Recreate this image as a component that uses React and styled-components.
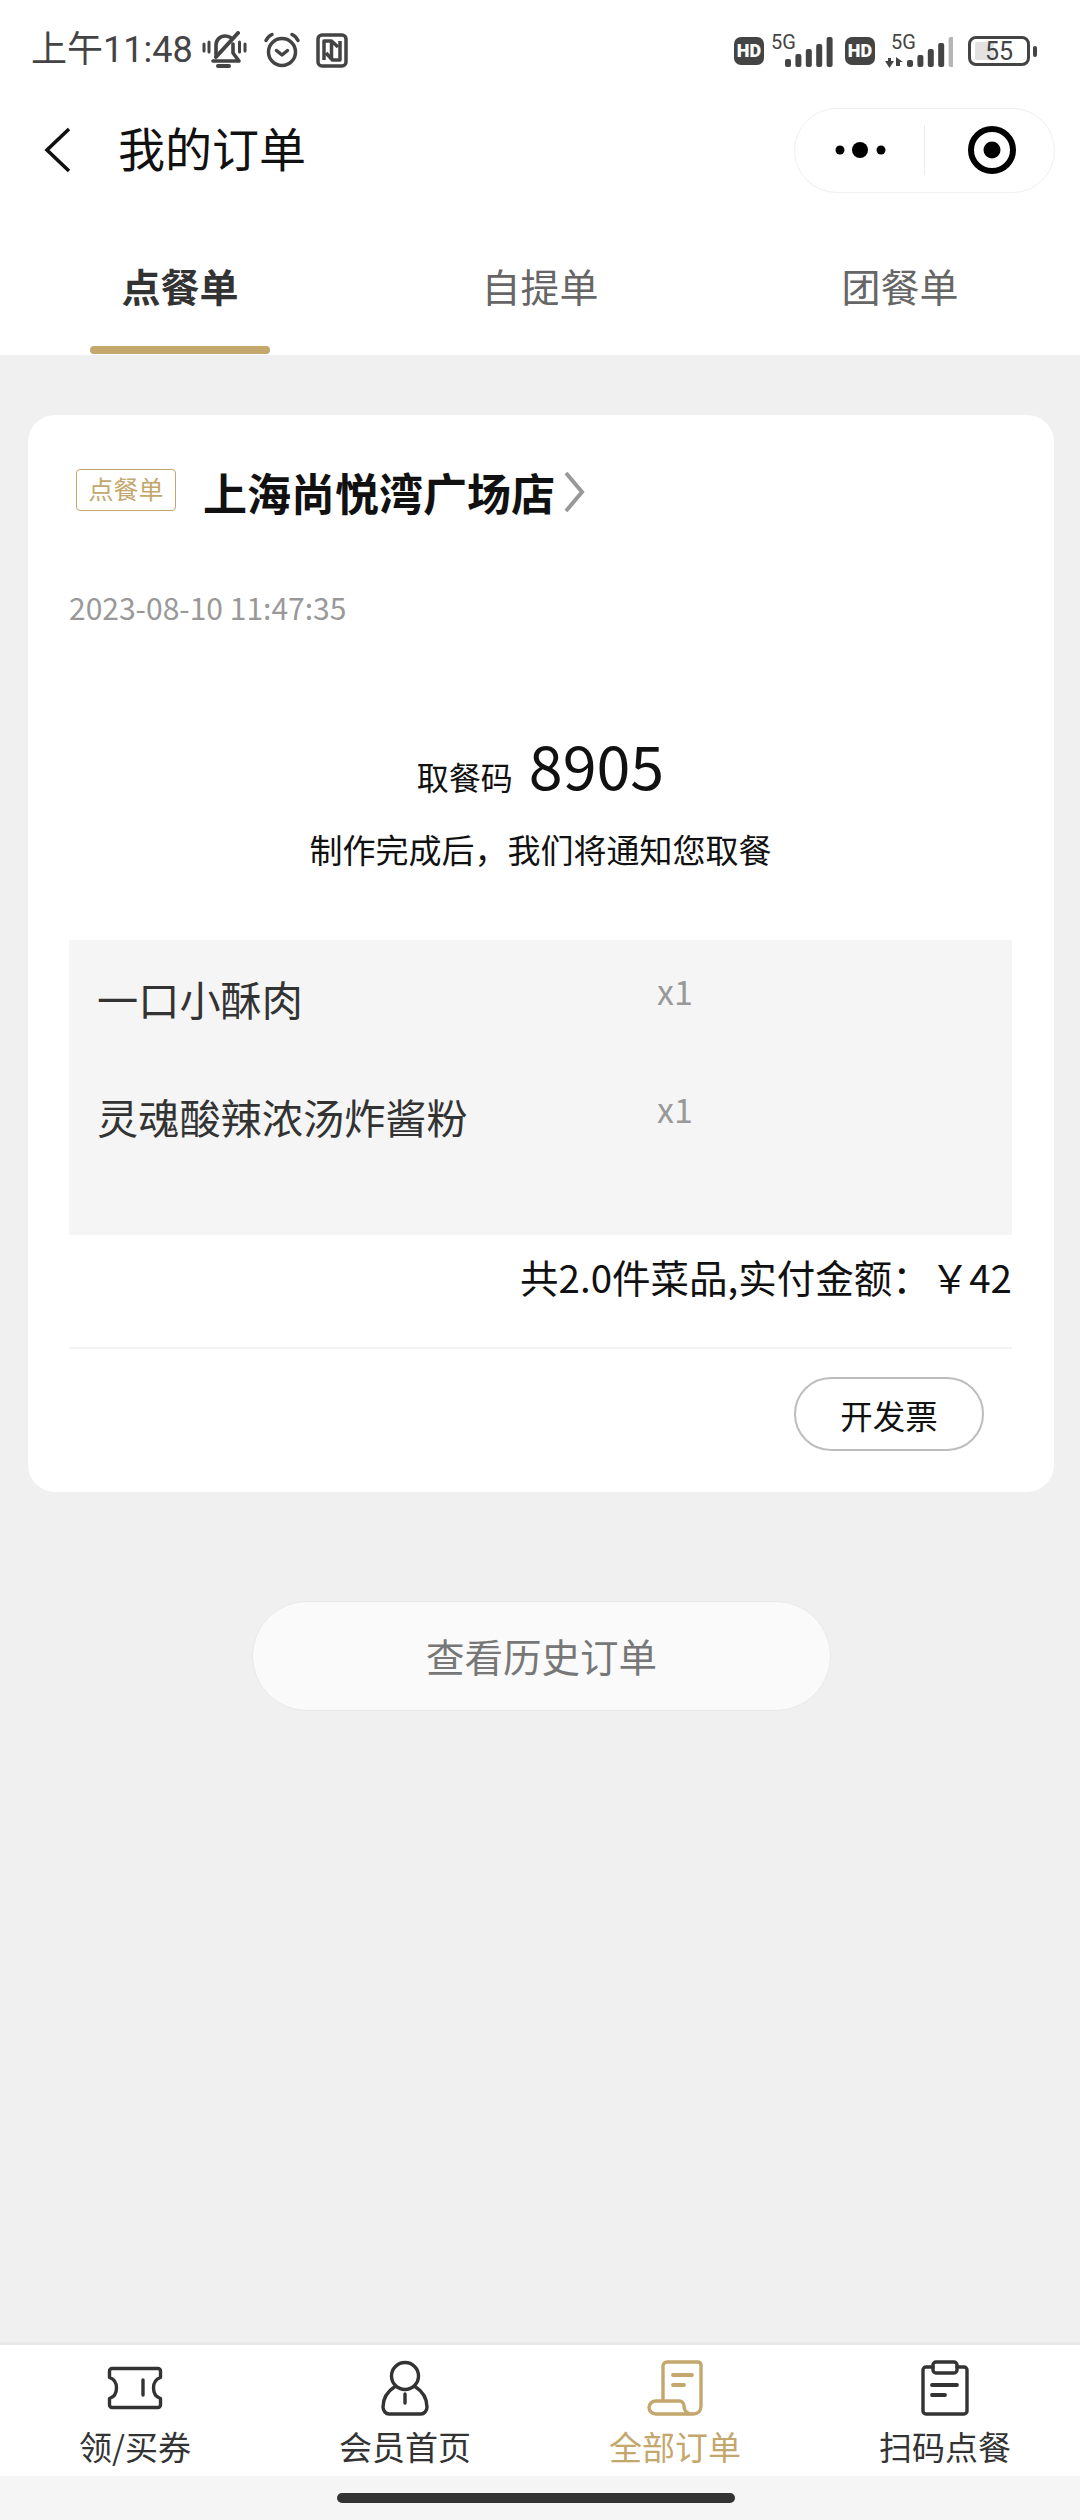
import React from "react";
import styled, { createGlobalStyle } from "styled-components";

const FONT = `"Noto Sans CJK SC", "Noto Sans", sans-serif`;
const GOLD = "#c4a76c";

const Global = createGlobalStyle`
  html, body { margin: 0; padding: 0; background: #f0f0f0; }
  * { box-sizing: border-box; }
  body { font-family: ${FONT}; }
`;

const Page = styled.div`
  width: 1080px;
  height: 2520px;
  display: flex;
  flex-direction: column;
  background: #f0f0f0;
  overflow: hidden;
`;

const Header = styled.header`
  background: #fff;
`;

const StatusBar = styled.div`
  height: 100px;
  display: flex;
  align-items: center;
  padding: 0 50px 0 31px;
  color: #444;
`;

const Time = styled.span`
  font-family: Roboto, "Noto Sans CJK SC", sans-serif;
  font-size: 36px;
  line-height: 50px;
  width: 171px;
`;

const StatusIcons = styled.div`
  display: flex;
  align-items: center;
  gap: 15px;
  height: 40px;
`;

const Spacer = styled.div`
  flex: 1;
`;

const NetworkIcons = styled.div`
  display: flex;
  align-items: center;
  gap: 6px;
  margin-top: 1px;
`;

const HdBadge = styled.span`
  width: 30px;
  height: 28px;
  border-radius: 7px;
  background: #444;
  color: #fff;
  font-family: Roboto, sans-serif;
  font-weight: 900;
  font-size: 18px;
  line-height: 28px;
  text-align: center;
`;

const Battery = styled.div`
  position: relative;
  width: 62px;
  height: 30px;
  margin-left: 9px;
  border: 3px solid #444;
  border-radius: 8px;
  font-family: Roboto, sans-serif;
  font-size: 25px;
  line-height: 25px;
  text-align: center;
  color: #444;
  &::before {
    content: "";
    position: absolute;
    left: 4px;
    top: 3px;
    bottom: 3px;
    width: 19px;
    background: #e2e2e2;
    border-radius: 2px;
    z-index: 0;
  }
  &::after {
    content: "";
    position: absolute;
    right: -10px;
    top: 7px;
    width: 4px;
    height: 11px;
    border-radius: 2px;
    background: #444;
  }
`;

const BatteryText = styled.span`
  position: relative;
  z-index: 1;
`;

const NavBar = styled.div`
  height: 100px;
  display: flex;
  align-items: center;
  padding: 0 25px 0 44px;
`;

const Title = styled.h1`
  margin: -6px 0 0 46px;
  font-size: 47px;
  font-weight: 400;
  line-height: 60px;
  color: #111;
  letter-spacing: 0;
`;

const Capsule = styled.div`
  width: 261px;
  height: 85px;
  border: 1.5px solid #efefef;
  border-radius: 43px;
  display: flex;
  align-items: center;
`;

const CapsuleCell = styled.div`
  height: 50px;
  display: flex;
  align-items: center;
  justify-content: center;
  width: ${(p) => p.$w}px;
  padding-left: ${(p) => p.$inset || 0}px;
  border-right: ${(p) => (p.$divided ? "1.5px solid #ececec" : "none")};
`;

const Tabs = styled.nav`
  height: 155px;
  display: flex;
`;

const Tab = styled.div`
  flex: 1;
  display: flex;
  flex-direction: column;
  align-items: center;
  padding-top: 55px;
  font-size: 39px;
  line-height: 60px;
  font-weight: ${(p) => (p.$active ? 700 : 400)};
  color: ${(p) => (p.$active ? "#333" : "#666")};
`;

const TabMark = styled.div`
  width: 180px;
  height: 8px;
  border-radius: 4px;
  margin-top: auto;
  margin-bottom: 1px;
  background: ${GOLD};
`;

const Main = styled.main`
  flex: 1;
  padding: 60px 0 0 28px;
  display: flex;
  flex-direction: column;
`;

const Card = styled.section`
  width: 1026px;
  height: 1077px;
  background: #fff;
  border-radius: 27px;
  padding: 52px 42px 0 41px;
  display: flex;
  flex-direction: column;
`;

const StoreRow = styled.div`
  display: flex;
  align-items: center;
  height: 50px;
  padding-left: 7px;
`;

const TypeTag = styled.span`
  width: 100px;
  height: 42px;
  border: 1.500px solid ${GOLD};
  border-radius: 4px;
  color: ${GOLD};
  font-size: 25px;
  line-height: 37px;
  text-align: center;
  margin-top: -4px;
`;

const StoreName = styled.span`
  margin-left: 27px;
  font-size: 44px;
  font-weight: 700;
  line-height: 50px;
  color: #111;
`;

const StoreChevron = styled.svg`
  margin: -1px 0 0 8px;
`;

const DateText = styled.div`
  margin-top: 70px;
  font-size: 30px;
  line-height: 40px;
  color: #999;
`;

const CodeRow = styled.div`
  margin-top: 97px;
  display: flex;
  justify-content: center;
  align-items: baseline;
  gap: 16px;
  height: 80px;
  line-height: 80px;
  color: #111;
`;

const CodeLabel = styled.span`
  font-size: 32px;
`;

const CodeValue = styled.span`
  font-size: 61px;
`;

const Hint = styled.div`
  margin-top: 23px;
  font-size: 33px;
  line-height: 44px;
  text-align: center;
  color: #111;
`;

const ItemsBox = styled.div`
  margin-top: 69px;
  height: 295px;
  background: #f5f5f5;
  padding: 28px 28px 0;
  display: flex;
  flex-direction: column;
  gap: 60px;
`;

const ItemRow = styled.div`
  display: grid;
  grid-template-columns: 560px 1fr;
  height: 58px;
`;

const ItemName = styled.span`
  font-size: 41.200px;
  line-height: 60px;
  color: #333;
`;

const ItemQty = styled.span`
  font-size: 34px;
  line-height: 46px;
  color: #999;
`;

const Total = styled.div`
  margin-top: 14px;
  font-size: 38.500px;
  line-height: 54px;
  text-align: right;
  color: #111;
`;

const Divider = styled.div`
  margin-top: 44px;
  height: 1.500px;
  background: #f3f3f3;
`;

const ActionRow = styled.div`
  display: flex;
  justify-content: flex-end;
  padding: 28px 28px 0 0;
`;

const InvoiceButton = styled.div`
  width: 190px;
  height: 74px;
  border: 2px solid #bdbdbd;
  border-radius: 37px;
  font-size: 32.500px;
  line-height: 72px;
  text-align: center;
  color: #111;
`;

const HistoryButton = styled.div`
  margin: 109px 0 0 224px;
  width: 579px;
  height: 110px;
  border: 1.500px solid #e9e9e9;
  border-radius: 55px;
  background: #fafafa;
  font-size: 38.500px;
  line-height: 107px;
  text-align: center;
  color: #777;
`;

const TabBar = styled.footer`
  height: 134px;
  background: #fff;
  border-top: 3px solid #e9e9e9;
  display: grid;
  grid-template-columns: repeat(4, 270px);
`;

const BarItem = styled.div`
  display: flex;
  flex-direction: column;
  align-items: center;
  color: ${(p) => (p.$active ? GOLD : "#333")};
`;

const BarIcon = styled.div`
  height: 56px;
  margin-top: 15px;
  display: flex;
  align-items: center;
  justify-content: center;
`;

const BarLabel = styled.span`
  margin-top: 7px;
  font-size: 33px;
  line-height: 46px;
`;

const HomeArea = styled.div`
  height: 44px;
  background: #f5f5f5;
  display: flex;
  justify-content: center;
  padding: 17px 8px 0 0;
`;

const HomeIndicator = styled.div`
  width: 398px;
  height: 10px;
  border-radius: 5px;
  background: #333;
`;

const Signal = ({ dim, arrows }) => {
  const width = arrows ? 72 : 69;
  const x0 = arrows ? 26 : 15;
  const bars = arrows ? [7, 12, 18, 24, 30] : [8, 13, 18, 23, 30];
  return (
    <svg width={width} height="44" viewBox={`0 -5 ${width} 44`}>
      <text x={arrows ? 10 : 1} y="15" fontFamily="Roboto, sans-serif" fontSize="20" fill="#444">5G</text>
      {arrows && (
        <path
          fill="#444"
          d="M7 24h3v3h3l-4.500 7L4 27h3zM15 32v-9l7 5h-3v4z"
        />
      )}
      {bars.map((h, i) => (
        <rect
          key={i}
          x={x0 + i * 10.4}
          y={33 - h}
          width="6"
          height={h}
          rx="2"
          fill={dim && i === 4 ? "#b5b5b5" : "#444"}
        />
      ))}
    </svg>
  );
};

const MuteBell = () => (
  <svg width="46" height="38" viewBox="0 0 46 38" fill="none" stroke="#444" strokeWidth="3.600" strokeLinecap="round" strokeLinejoin="round">
    <path d="M14 24V14c0-5 4-9 9-9 2 0 4 .5 5.500 1.500" />
    <path d="M31 13v9l6 8H11" />
    <path d="M14 26 36 2" strokeWidth="4" />
    <path d="M16 35h11" strokeWidth="4" />
    <path d="M2 13v7M7 11v10M37.500 11v10M43 13v7" strokeWidth="3" />
  </svg>
);

const Alarm = () => (
  <svg width="38" height="36" viewBox="0 0 38 36" fill="none" stroke="#444" strokeWidth="3.500" strokeLinecap="round" strokeLinejoin="round">
    <circle cx="19" cy="20" r="13.500" />
    <path d="M13.500 18.500 19 23l5.500-4.500" />
    <path d="M3 8.500C4.500 5.500 6.500 3.500 9 2.500M35 8.500C33.500 5.500 31.500 3.500 29 2.500" />
  </svg>
);

const Nfc = () => (
  <svg width="32" height="35" viewBox="0 0 32 35" fill="none" stroke="#444" strokeWidth="3.500" strokeLinejoin="round">
    <rect x="2" y="2" width="28" height="31" rx="4" />
    <path d="M8 27V8h7.500L22 14" />
    <path d="M24 8v19h-7.500L10 20" />
    <path d="M15.500 8v19" />
  </svg>
);

const Ticket = () => (
  <svg width="56" height="46" viewBox="0 0 56 46" fill="none" stroke="currentColor" strokeWidth="3.400" strokeLinecap="round" strokeLinejoin="round">
    <path d="M5 3.500h46a2.500 2.500 0 0 1 2.500 2.500v6.500C49 14 46.500 18 46.500 23s2.500 9 7 10.500V40a2.500 2.500 0 0 1-2.500 2.500H5A2.500 2.500 0 0 1 2.500 40v-6.500C7 32 9.500 28 9.500 23S7 14 2.500 12.500V6A2.500 2.500 0 0 1 5 3.500Z" />
    <path d="M36 15v15" />
  </svg>
);

const Person = () => (
  <svg width="48" height="56" viewBox="0 0 48 56" fill="none" stroke="currentColor" strokeWidth="3.400" strokeLinecap="round" strokeLinejoin="round">
    <circle cx="24" cy="16" r="13.500" />
    <path d="M14 26.500C7 31 2 38 2 47c0 4 3 7 6 7h32c3 0 6-3 6-7 0-9-5-16-12-20.500" />
    <path d="M24 34v9" />
  </svg>
);

const Scroll = () => (
  <svg width="56" height="56" viewBox="0 0 56 56" fill="none" stroke="currentColor" strokeWidth="3.400" strokeLinecap="round" strokeLinejoin="round">
    <path d="M16 41V6a4 4 0 0 1 4-4h31a3 3 0 0 1 3 3v41c0 5-3 8-8 8s-9-3-9-8c0-3-2-5-5-5H9c-4 0-7 3-7 6.500S5 54 9 54h37" />
    <path d="M26 15h19M26 25h11" strokeWidth="3.800" />
  </svg>
);

const Clipboard = () => (
  <svg width="48" height="56" viewBox="0 0 48 56" fill="none" stroke="currentColor" strokeWidth="3.400" strokeLinecap="round" strokeLinejoin="round">
    <path d="M12 7H5a3 3 0 0 0-3 3v41a3 3 0 0 0 3 3h38a3 3 0 0 0 3-3V10a3 3 0 0 0-3-3h-7" />
    <rect x="12" y="2" width="24" height="11" rx="3" />
    <path d="M11 25h25M11 35h13" strokeWidth="3.800" />
  </svg>
);

const navItems = [
  { label: "领/买券", Icon: Ticket },
  { label: "会员首页", Icon: Person },
  { label: "全部订单", Icon: Scroll, active: true },
  { label: "扫码点餐", Icon: Clipboard },
];

export default function App() {
  return (
    <Page>
      <Global />
      <Header>
        <StatusBar>
          <Time>上午11:48</Time>
          <StatusIcons>
            <MuteBell />
            <Alarm />
            <Nfc />
          </StatusIcons>
          <Spacer />
          <NetworkIcons>
            <HdBadge>HD</HdBadge>
            <Signal />
            <HdBadge>HD</HdBadge>
            <Signal dim arrows />
            <Battery>
              <BatteryText>55</BatteryText>
            </Battery>
          </NetworkIcons>
        </StatusBar>
        <NavBar>
          <svg width="28" height="46" viewBox="0 0 28 46" fill="none" stroke="#111" strokeWidth="3.600">
            <path d="M25 2 3 23l22 21" />
          </svg>
          <Title>我的订单</Title>
          <Spacer />
          <Capsule>
            <CapsuleCell $w={130} $divided>
              <svg width="60" height="20" viewBox="0 0 60 20" fill="#000">
                <circle cx="10" cy="10" r="4.500" />
                <circle cx="30" cy="10" r="8" />
                <circle cx="51" cy="10" r="4.500" />
              </svg>
            </CapsuleCell>
            <CapsuleCell $w={128} $inset={6}>
              <svg width="50" height="50" viewBox="0 0 50 50">
                <circle cx="25" cy="25" r="21" fill="none" stroke="#000" strokeWidth="6" />
                <circle cx="25" cy="25" r="8.500" fill="#000" />
              </svg>
            </CapsuleCell>
          </Capsule>
        </NavBar>
        <Tabs>
          <Tab $active>
            点餐单
            <TabMark />
          </Tab>
          <Tab>自提单</Tab>
          <Tab>团餐单</Tab>
        </Tabs>
      </Header>
      <Main>
        <Card>
          <StoreRow>
            <TypeTag>点餐单</TypeTag>
            <StoreName>上海尚悦湾广场店</StoreName>
            <StoreChevron width="22" height="42" viewBox="0 0 22 42" fill="none" stroke="#999" strokeWidth="4">
              <path d="M3 2l16 19L3 40" />
            </StoreChevron>
          </StoreRow>
          <DateText>2023-08-10 11:47:35</DateText>
          <CodeRow>
            <CodeLabel>取餐码</CodeLabel>
            <CodeValue>8905</CodeValue>
          </CodeRow>
          <Hint>制作完成后，我们将通知您取餐</Hint>
          <ItemsBox>
            <ItemRow>
              <ItemName>一口小酥肉</ItemName>
              <ItemQty>x1</ItemQty>
            </ItemRow>
            <ItemRow>
              <ItemName>灵魂酸辣浓汤炸酱粉</ItemName>
              <ItemQty>x1</ItemQty>
            </ItemRow>
          </ItemsBox>
          <Total>共2.0件菜品,实付金额：￥42</Total>
          <Divider />
          <ActionRow>
            <InvoiceButton>开发票</InvoiceButton>
          </ActionRow>
        </Card>
        <HistoryButton>查看历史订单</HistoryButton>
      </Main>
      <TabBar>
        {navItems.map(({ label, Icon, active }) => (
          <BarItem key={label} $active={active}>
            <BarIcon>
              <Icon />
            </BarIcon>
            <BarLabel>{label}</BarLabel>
          </BarItem>
        ))}
      </TabBar>
      <HomeArea>
        <HomeIndicator />
      </HomeArea>
    </Page>
  );
}
